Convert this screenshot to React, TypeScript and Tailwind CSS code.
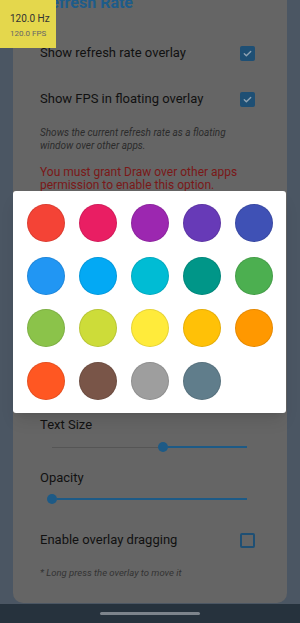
import React from "react";

const colors = [
  "#F44336", "#E91E63", "#9C27B0", "#673AB7", "#3F51B5",
  "#2196F3", "#03A9F4", "#00BCD4", "#009688", "#4CAF50",
  "#8BC34A", "#CDDC39", "#FFEB3B", "#FFC107", "#FF9800",
  "#FF5722", "#795548", "#9E9E9E", "#607D8B",
];

function Check({ checked }: { checked: boolean }) {
  return checked ? (
    <div className="w-[15px] h-[15px] rounded-[2px] bg-[#1e4f74] flex items-center justify-center">
      <svg width="11" height="11" viewBox="0 0 24 24" fill="none" stroke="#8fa3b3" strokeWidth="3" strokeLinecap="round" strokeLinejoin="round">
        <path d="M5 12.5l4.5 4.5L19 7.5" />
      </svg>
    </div>
  ) : (
    <div className="w-[15px] h-[15px] rounded-[2px] border-2 border-[#1e4f74]" />
  );
}

function Row({ label, checked }: { label: string; checked: boolean }) {
  return (
    <div className="h-[46px] flex items-center justify-between pr-[32px]">
      <span className="text-[13px] leading-[16px] text-[#111]">{label}</span>
      <Check checked={checked} />
    </div>
  );
}

export default function App() {
  return (
    <div
      className="relative w-[300px] h-[623px] overflow-hidden bg-[#4b5663] flex flex-col"
      style={{ fontFamily: 'Roboto, "Noto Sans", sans-serif' }}
    >
      <div className="mx-[13px] flex-1 bg-[#656565] rounded-b-[10px] pl-[27px] overflow-hidden">
        <div className="mt-[-7px] h-[20px] leading-[20px] text-[16px] font-bold text-[#1d5c8a]">Refresh Rate</div>
        <div className="mt-[17px]">
          <Row label="Show refresh rate overlay" checked />
          <Row label="Show FPS in floating overlay" checked />
        </div>
        <div className="mt-[5px] text-[10px] leading-[12.5px] italic text-[#2b2b2b] pr-[20px]">
          Shows the current refresh rate as a floating
          <br />
          window over other apps.
        </div>
        <div className="mt-[14px] text-[12px] leading-[13px] text-[#7a1818]">
          You must grant Draw over other apps
          <br />
          permission to enable this option.
        </div>
        <div className="h-[225px]" />
        <div className="text-[13px] leading-[16px] text-[#111]">Text Size</div>
        <div className="mt-[4px] h-[20px] ml-[12px] w-[195px] flex items-center">
          <div className="w-[106px] h-[1px] bg-[#555]" />
          <div className="w-[10px] h-[10px] rounded-full bg-[#1d5a86]" />
          <div className="flex-1 h-[2px] bg-[#1d5a86]" />
        </div>
        <div className="mt-[13px] text-[13px] leading-[16px] text-[#111]">Opacity</div>
        <div className="mt-[3px] h-[20px] ml-[7px] w-[200px] flex items-center">
          <div className="w-[10px] h-[10px] rounded-full bg-[#1d5a86]" />
          <div className="flex-1 h-[2px] bg-[#1d5a86]" />
        </div>
        <div className="mt-[16px] h-[30px] flex items-center justify-between pr-[32px]">
          <span className="text-[13px] leading-[16px] text-[#111]">Enable overlay dragging</span>
          <Check checked={false} />
        </div>
        <div className="mt-[12px] text-[9.5px] leading-[12px] italic text-[#333]">* Long press the overlay to move it</div>
      </div>
      <div className="h-[19px] mt-[1px] bg-[#26323d] flex items-center justify-center">
        <div className="w-[100px] h-[3px] rounded-full bg-[#7d848c]" />
      </div>

      <div className="absolute left-0 top-0 w-[56px] h-[48px] bg-[#e4d74c] pl-[10px] pt-[12px]">
        <div className="text-[10px] leading-[13px] text-[#333]">120.0 Hz</div>
        <div className="mt-[4px] text-[8px] leading-[10px] text-[#666]">120.0 FPS</div>
      </div>

      <div className="absolute left-[13px] top-[191px] w-[273px] h-[222px] bg-white rounded-[3px] shadow-lg pt-[13px] pl-[14px]">
        <div className="grid grid-cols-5 w-[246px] gap-x-[14px] gap-y-[14.5px]">
          {colors.map((c) => (
            <div
              key={c}
              className="w-[38px] h-[38px] rounded-full border border-black/10"
              style={{ backgroundColor: c }}
            />
          ))}
        </div>
      </div>
    </div>
  );
}
